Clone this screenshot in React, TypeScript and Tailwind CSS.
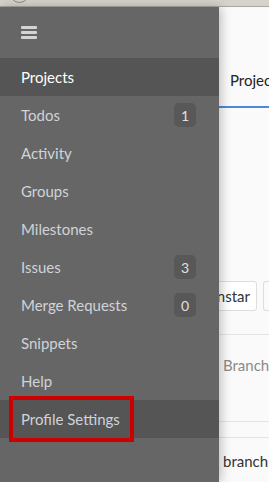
import { useState } from 'react';

const NAV = [
  { label: 'Projects', active: true },
  { label: 'Todos', count: 1 },
  { label: 'Activity' },
  { label: 'Groups' },
  { label: 'Milestones' },
  { label: 'Issues', count: 3 },
  { label: 'Merge Requests', count: 0 },
  { label: 'Snippets' },
  { label: 'Help' },
  { label: 'Profile Settings', highlight: true },
];

export default function App() {
  const [open] = useState(true);

  return (
    <div className="h-[482px] w-[269px] overflow-hidden flex flex-col bg-[#fafafa] font-['Lato','Noto_Sans',sans-serif]">
      {/* browser chrome strip */}
      <div className="h-[7px] shrink-0 bg-[#d6d3cd] border-b border-[#a9a7a2] relative overflow-hidden">
        <div className="absolute left-[10px] top-[-16px] w-[19px] h-[19px] rounded-full border border-[#8d8b87]" />
      </div>

      <div className="flex flex-1 min-h-0">
        {open && (
          <aside className="w-[219px] shrink-0 bg-[#666666] flex flex-col relative z-10 shadow-[2px_0_10px_rgba(0,0,0,0.25)]">
            <div className="h-[51px] flex items-center pl-[21px]">
              <div className="flex flex-col gap-[2px] w-[16px]">
                <span className="h-[3px] bg-[#d4d4d4] rounded-[1px]" />
                <span className="h-[3px] bg-[#d4d4d4] rounded-[1px]" />
                <span className="h-[3px] bg-[#d4d4d4] rounded-[1px]" />
              </div>
            </div>
            <nav className="flex flex-col">
              {NAV.map((item) => (
                <div
                  key={item.label}
                  className={`h-[38px] flex items-center justify-between pl-[21px] pr-[23px] text-[15px] relative ${
                    item.active || item.highlight ? 'bg-[#555555]' : ''
                  } ${item.active ? 'text-white' : 'text-[#d0d3d8]'}`}
                >
                  <span>{item.label}</span>
                  {item.count !== undefined && (
                    <span className="w-[22px] h-[24px] rounded-[5px] bg-[#585858] flex items-center justify-center text-[14px] text-[#e0e0e0]">
                      {item.count}
                    </span>
                  )}
                  {item.highlight && (
                    <span className="absolute left-[9px] top-[-4px] w-[125px] h-[46px] border-[4px] border-[#cc0000]" />
                  )}
                </div>
              ))}
            </nav>
          </aside>
        )}

        <main className="flex-1 min-w-0 overflow-hidden flex flex-col text-[15px]">
          <div className="h-[51px] shrink-0" />
          <div className="h-[50px] shrink-0 border-b-2 border-[#4a89dc] flex items-center pl-[11px] pb-[4px] text-[#222] whitespace-nowrap">
            Projects
          </div>
          <div className="h-[173px] shrink-0" />
          <div className="h-[30px] shrink-0 flex items-center whitespace-nowrap">
            <div className="ml-[-20px] h-[30px] px-[6px] flex items-center border border-[#dddddd] rounded-[3px] bg-white text-[#333]">
              Unstar
            </div>
            <div className="ml-[6px] w-[10px] h-[30px] border-l border-t border-b border-[#dddddd] rounded-l-[3px]" />
          </div>
          <div className="h-[24px] shrink-0 border-b border-[#e5e5e5]" />
          <div className="h-[86px] shrink-0 flex items-start pt-[19px] pl-[4px] text-[#8a8a8a] whitespace-nowrap">
            Branches
          </div>
          <div className="h-[17px] shrink-0 border-t border-b border-[#e5e5e5]" />
          <div className="h-[46px] shrink-0 flex items-center pl-[4px] text-[#333] whitespace-nowrap">
            branch
          </div>
        </main>
      </div>
    </div>
  );
}
